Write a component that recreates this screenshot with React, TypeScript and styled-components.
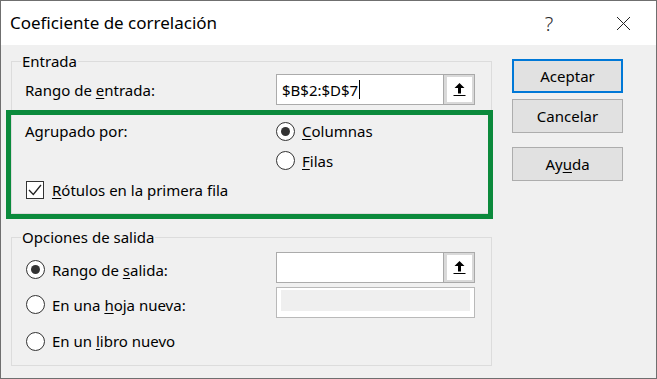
import React from "react";
import styled, { createGlobalStyle } from "styled-components";

const Global = createGlobalStyle`
  html, body { margin: 0; padding: 0; background: #f0f0f0; }
  body {
    font-family: "Segoe UI", "Noto Sans", "Open Sans", sans-serif;
    font-size: 15px;
    color: #000;
  }
  * { box-sizing: border-box; }
`;

const Window = styled.div`
  width: 657px;
  height: 379px;
  border: 1px solid #6f6f6f;
  background: #f0f0f0;
  display: flex;
  flex-direction: column;
  overflow: hidden;
`;

const TitleBar = styled.div`
  height: 44px;
  background: #ffffff;
  display: flex;
  align-items: center;
  padding-left: 9px;
  flex: none;
`;

const Title = styled.div`
  flex: 1;
  font-size: 17px;
  line-height: 22px;
  color: #000;
  white-space: nowrap;
`;

const HelpButton = styled.div`
  width: 30px;
  margin-right: 36px;
  text-align: center;
  font-size: 20px;
  font-weight: 300;
  color: #2a2a2a;
`;

const CloseButton = styled.div`
  width: 46px;
  margin-right: 10px;
  display: flex;
  justify-content: center;
  align-items: center;
`;

const Body = styled.div`
  flex: 1;
  display: flex;
  padding-left: 10px;
  gap: 20px;
`;

const LeftColumn = styled.div`
  width: 481px;
  display: flex;
  flex-direction: column;
`;

const Group = styled.fieldset<{ $top: number }>`
  margin: ${(p) => p.$top}px 0 0 0;
  padding: 0;
  border: 1px solid #dcdcdc;
  min-width: 0;
`;

const Legend = styled.legend`
  margin-left: 9px;
  padding: 0 1px;
  line-height: 20px;
  font-size: 15px;
`;

const InputRow = styled.div`
  display: grid;
  grid-template-columns: 251px 199px;
  align-items: center;
  margin-top: 3px;
  padding: 0 16px 0 13px;
`;

const FieldLabel = styled.span`
  white-space: nowrap;
`;

const RefField = styled.div`
  display: flex;
  height: 31px;
`;

const TextBox = styled.div`
  flex: 1;
  height: 31px;
  border: 1px solid #ababab;
  border-right: none;
  background: #fff;
  display: flex;
  align-items: center;
  padding-left: 5px;
  white-space: nowrap;
`;

const Caret = styled.span`
  display: inline-block;
  width: 1px;
  height: 19px;
  background: #000;
  margin-left: 1px;
`;

const RefButton = styled.div`
  width: 32px;
  height: 31px;
  border: 1px solid #a9a9a9;
  background: #d9d9d9;
  display: flex;
  align-items: center;
  justify-content: center;
`;

const RefInner = styled.div`
  width: 25px;
  height: 25px;
  background: #fff;
  display: flex;
  align-items: center;
  justify-content: center;
`;

const DisabledBox = styled.div`
  height: 31px;
  border: 1px solid #b9b9b9;
  background: #fff;
  padding: 2px 4px 6px 4px;
`;

const DisabledFill = styled.div`
  height: 100%;
  background: #efefef;
`;

const Highlight = styled.div`
  margin: 5px -2px -6px -6px;
  border: 5px solid #0b8a3c;
  padding: 1px 0 9px 14px;
  display: grid;
  grid-template-columns: 251px auto;
  grid-template-rows: 30px 29px 30px;
  align-items: center;
`;

const SpanAll = styled.div`
  grid-column: 1 / -1;
`;

const Option = styled.label<{ $gap?: number; $indent?: number }>`
  display: flex;
  align-items: center;
  gap: ${(p) => p.$gap ?? 7}px;
  margin-left: ${(p) => p.$indent ?? 0}px;
  white-space: nowrap;
`;

const RadioCircle = styled.span<{ $checked?: boolean }>`
  width: 19px;
  height: 19px;
  flex: none;
  border-radius: 50%;
  border: 1px solid #333;
  background: #fff;
  display: flex;
  align-items: center;
  justify-content: center;
  &::after {
    content: "";
    width: 9px;
    height: 9px;
    border-radius: 50%;
    background: #333;
    display: ${(p) => (p.$checked ? "block" : "none")};
  }
`;

const CheckBox = styled.span`
  width: 18px;
  height: 18px;
  flex: none;
  border: 1px solid #333;
  background: #fff;
  display: flex;
  align-items: center;
  justify-content: center;
`;

const OutputGrid = styled.div`
  display: grid;
  grid-template-columns: 250px 199px;
  grid-template-rows: 31px 31px 34px;
  row-gap: 4px;
  padding: 5px 16px 9px 14px;
`;

const OutputCell = styled.div`
  display: flex;
  align-items: center;
  padding-top: 4px;
`;

const RightColumn = styled.div`
  display: flex;
  flex-direction: column;
  padding-top: 14px;
`;

const Button = styled.button<{ $primary?: boolean; $space?: number }>`
  width: 111px;
  height: 34px;
  margin-top: ${(p) => p.$space ?? 0}px;
  border: ${(p) => (p.$primary ? "2px solid #0078d7" : "1px solid #adadad")};
  background: #e1e1e1;
  font-family: inherit;
  font-size: 15px;
  color: #000;
  padding: 0;
`;

const U = styled.u`
  text-decoration-thickness: 1px;
  text-underline-offset: 2px;
`;

const UpArrow = () => (
  <svg width="13" height="15" viewBox="0 0 13 15">
    <polygon points="6.5,1 11.5,6 8,6 8,11.5 5,11.5 5,6 1.5,6" fill="#000" />
    <rect x="0.5" y="13" width="12" height="1" fill="#000" />
  </svg>
);

const CloseIcon = () => (
  <svg width="15" height="15" viewBox="0 0 15 15">
    <path d="M1 1 L14 14 M14 1 L1 14" stroke="#222" strokeWidth="1" fill="none" />
  </svg>
);

const CheckMark = () => (
  <svg width="16" height="16" viewBox="0 0 16 16">
    <path d="M2 8 L6.3 12.5 L14 3" stroke="#222" strokeWidth="1.3" fill="none" />
  </svg>
);

export default function App() {
  return (
    <>
      <Global />
      <Window>
        <TitleBar>
          <Title>Coeficiente de correlación</Title>
          <HelpButton>?</HelpButton>
          <CloseButton>
            <CloseIcon />
          </CloseButton>
        </TitleBar>
        <Body>
          <LeftColumn>
            <Group $top={6}>
              <Legend>Entrada</Legend>
              <InputRow>
                <FieldLabel>
                  Rango de <U>e</U>ntrada:
                </FieldLabel>
                <RefField>
                  <TextBox>
                    $B$2:$D$7
                    <Caret />
                  </TextBox>
                  <RefButton>
                    <RefInner>
                      <UpArrow />
                    </RefInner>
                  </RefButton>
                </RefField>
              </InputRow>
              <Highlight>
                <FieldLabel>Agrupado por:</FieldLabel>
                <Option>
                  <RadioCircle $checked />
                  <span>
                    <U>C</U>olumnas
                  </span>
                </Option>
                <span />
                <Option>
                  <RadioCircle />
                  <span>
                    <U>F</U>ilas
                  </span>
                </Option>
                <SpanAll>
                  <Option $gap={8} $indent={1}>
                    <CheckBox>
                      <CheckMark />
                    </CheckBox>
                    <span>
                      <U>R</U>ótulos en la primera fila
                    </span>
                  </Option>
                </SpanAll>
              </Highlight>
            </Group>
            <Group $top={13}>
              <Legend>Opciones de salida</Legend>
              <OutputGrid>
                <OutputCell>
                  <Option>
                    <RadioCircle $checked />
                    <span>
                      Rango de <U>s</U>alida:
                    </span>
                  </Option>
                </OutputCell>
                <RefField>
                  <TextBox />
                  <RefButton>
                    <RefInner>
                      <UpArrow />
                    </RefInner>
                  </RefButton>
                </RefField>
                <OutputCell>
                  <Option>
                    <RadioCircle />
                    <span>
                      En una <U>h</U>oja nueva:
                    </span>
                  </Option>
                </OutputCell>
                <DisabledBox>
                  <DisabledFill />
                </DisabledBox>
                <OutputCell>
                  <Option>
                    <RadioCircle />
                    <span>
                      En un <U>l</U>ibro nuevo
                    </span>
                  </Option>
                </OutputCell>
              </OutputGrid>
            </Group>
          </LeftColumn>
          <RightColumn>
            <Button $primary>Aceptar</Button>
            <Button $space={6}>Cancelar</Button>
            <Button $space={14}>
              Ay<U>u</U>da
            </Button>
          </RightColumn>
        </Body>
      </Window>
    </>
  );
}
